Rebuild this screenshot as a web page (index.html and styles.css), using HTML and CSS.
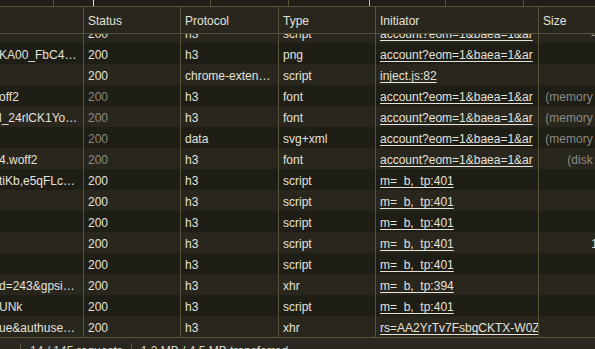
FILE: index.html
```html
<!DOCTYPE html>
<html>
<head>
<meta charset="utf-8">
<link rel="stylesheet" href="styles.css">
</head>
<body>
<div class="panel">
  <div class="overview">
    <div class="seg w53 first"></div>
    <div class="seg w40"></div>
    <div class="seg w117 mark-white"></div>
    <div class="seg w78"></div>
    <div class="seg w81"></div>
    <div class="seg w76 mark-pink"></div>
    <div class="seg w78"></div>
    <div class="seg grow"></div>
  </div>
  <div class="grid head">
    <div class="c"></div>
    <div class="c">Status</div>
    <div class="c">Protocol</div>
    <div class="c">Type</div>
    <div class="c">Initiator</div>
    <div class="c">Size</div>
  </div>
  <div class="body">
    <div class="rows">
      <div class="grid row even"><div class="c"></div><div class="c">200</div><div class="c">h3</div><div class="c">script</div><div class="c init"><span class="link">account?eom=1&amp;baea=1&amp;ar</span></div><div class="c sz dim">43.8 kB</div></div>
      <div class="grid row odd"><div class="c">KA00_FbC4lPkzLq9tMwR</div><div class="c">200</div><div class="c">h3</div><div class="c">png</div><div class="c init"><span class="link">account?eom=1&amp;baea=1&amp;ar</span></div><div class="c sz"></div></div>
      <div class="grid row even"><div class="c"></div><div class="c">200</div><div class="c">chrome-extension</div><div class="c">script</div><div class="c init"><span class="link">inject.js:82</span></div><div class="c sz"></div></div>
      <div class="grid row odd"><div class="c">off2</div><div class="c dim">200</div><div class="c">h3</div><div class="c">font</div><div class="c init"><span class="link">account?eom=1&amp;baea=1&amp;ar</span></div><div class="c sz dim">(memory cache)</div></div>
      <div class="grid row even"><div class="c">l_24rlCK1Yo_Tx8hQe</div><div class="c dim">200</div><div class="c">h3</div><div class="c">font</div><div class="c init"><span class="link">account?eom=1&amp;baea=1&amp;ar</span></div><div class="c sz dim">(memory cache)</div></div>
      <div class="grid row odd"><div class="c"></div><div class="c dim">200</div><div class="c">data</div><div class="c">svg+xml</div><div class="c init"><span class="link">account?eom=1&amp;baea=1&amp;ar</span></div><div class="c sz dim">(memory cache)</div></div>
      <div class="grid row even"><div class="c">4.woff2</div><div class="c dim">200</div><div class="c">h3</div><div class="c">font</div><div class="c init"><span class="link">account?eom=1&amp;baea=1&amp;ar</span></div><div class="c sz dim">(disk cache)</div></div>
      <div class="grid row odd"><div class="c">tiKb,e5qFLc,IZT63,UUJqVe</div><div class="c">200</div><div class="c">h3</div><div class="c">script</div><div class="c init"><span class="link">m=_b,_tp:401</span></div><div class="c sz"></div></div>
      <div class="grid row even"><div class="c"></div><div class="c">200</div><div class="c">h3</div><div class="c">script</div><div class="c init"><span class="link">m=_b,_tp:401</span></div><div class="c sz"></div></div>
      <div class="grid row odd"><div class="c"></div><div class="c">200</div><div class="c">h3</div><div class="c">script</div><div class="c init"><span class="link">m=_b,_tp:401</span></div><div class="c sz"></div></div>
      <div class="grid row even"><div class="c"></div><div class="c">200</div><div class="c">h3</div><div class="c">script</div><div class="c init"><span class="link">m=_b,_tp:401</span></div><div class="c sz">15.2 kB</div></div>
      <div class="grid row odd"><div class="c"></div><div class="c">200</div><div class="c">h3</div><div class="c">script</div><div class="c init"><span class="link">m=_b,_tp:401</span></div><div class="c sz"></div></div>
      <div class="grid row even"><div class="c">d=243&amp;gpsiaid=17kq</div><div class="c">200</div><div class="c">h3</div><div class="c">xhr</div><div class="c init"><span class="link">m=_b,_tp:394</span></div><div class="c sz"></div></div>
      <div class="grid row odd"><div class="c">UNk</div><div class="c">200</div><div class="c">h3</div><div class="c">script</div><div class="c init"><span class="link">m=_b,_tp:401</span></div><div class="c sz"></div></div>
      <div class="grid row even"><div class="c">ue&amp;authuser=0&amp;hl=ko</div><div class="c">200</div><div class="c">h3</div><div class="c">xhr</div><div class="c init"><span class="link">rs=AA2YrTv7FsbgCKTX-W0ZXq</span></div><div class="c sz"></div></div>
    </div>
  </div>
  <div class="statusbar">
    <span class="sb-item">14 / 145 requests</span>
    <span class="sb-item">1.2 MB / 4.5 MB transferred</span>
  </div>
</div>
</body>
</html>
```

FILE: styles.css
```css
html, body {
  margin: 0;
  padding: 0;
}
body {
  width: 595px;
  height: 349px;
  overflow: hidden;
  background: #1e1d16;
  font-family: "Liberation Sans", Arial, sans-serif;
  font-size: 12px;
  color: #e4e2da;
}
.panel {
  display: flex;
  flex-direction: column;
  width: 595px;
  height: 349px;
  overflow: hidden;
}
.overview {
  display: flex;
  height: 6px;
  flex: none;
  border-bottom: 1px solid #57533a;
  background: #1f1e17;
}
.seg {
  box-sizing: border-box;
  height: 6px;
  border-left: 1px solid #57533a;
}
.seg.first { border-left: none; }
.seg.mark-white { border-left-color: #e8e8e8; }
.seg.mark-pink { border-left-color: #e4b4b0; }
.w53 { width: 53px; }
.w40 { width: 40px; }
.w117 { width: 117px; }
.w78 { width: 78px; }
.w81 { width: 81px; }
.w76 { width: 76px; }
.grow { flex: 1; }

.grid {
  display: grid;
  grid-template-columns: 83px 97px 98px 97px 163px 98px;
  width: 636px;
  flex: none;
}
.c {
  box-sizing: border-box;
  border-left: 1px solid #57533a;
  padding: 3px 4px 0 4px;
  line-height: 19px;
  height: 21px;
  white-space: nowrap;
  overflow: hidden;
  text-overflow: ellipsis;
}
.c:first-child {
  border-left: none;
  padding-left: 0;
  padding-right: 5px;
  text-indent: -1px;
}
.head {
  background: #29271d;
  border-bottom: 1px solid #57533a;
}
.head .c {
  height: 26px;
  padding-top: 2px;
  line-height: 24px;
}
.body {
  flex: none;
  height: 303px;
  overflow: hidden;
  border-bottom: 1px solid #57533a;
}
.rows {
  margin-top: -12px;
}
.row.even { background: #29271d; }
.row.odd { background: #1e1d16; }
.init {
  text-overflow: clip;
  padding-right: 0;
}
.link {
  text-decoration: underline;
  text-underline-offset: 2px;
}
.dim { color: #8c8a82; }
.sz {
  text-align: right;
  text-overflow: clip;
}
.statusbar {
  flex: none;
  display: flex;
  align-items: center;
  height: 26px;
  background: #29271f;
  padding-left: 20px;
}
.sb-item {
  border-left: 1px solid #57533a;
  padding: 0 8px 0 9px;
  line-height: 16px;
  color: #d8d6ce;
}
```
